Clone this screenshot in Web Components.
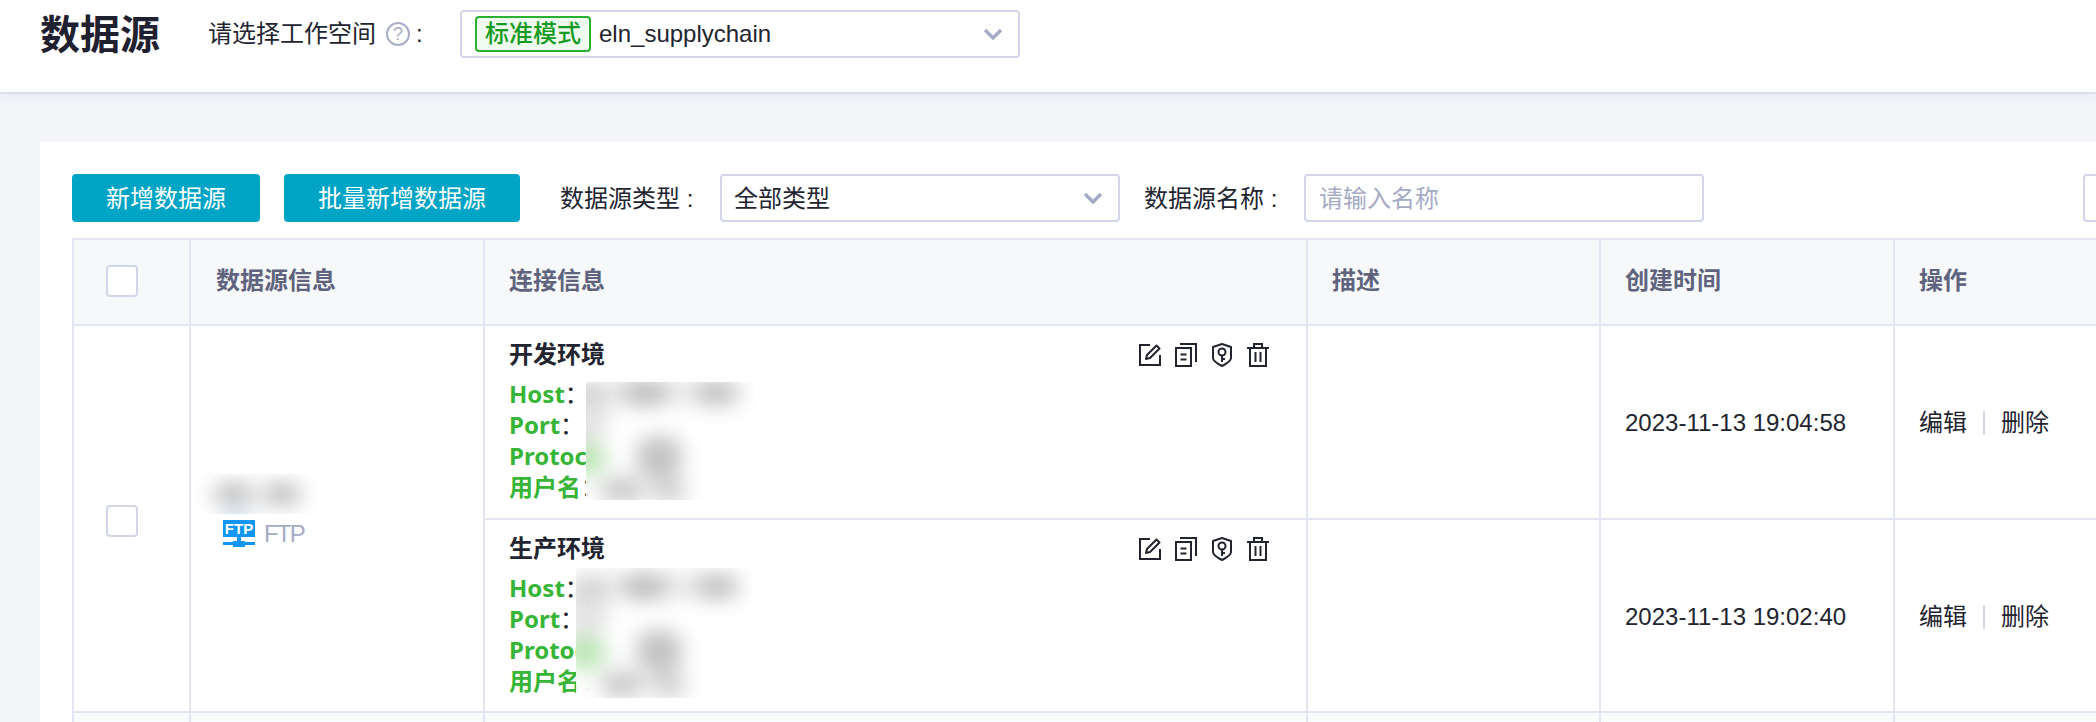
<!DOCTYPE html>
<html lang="zh">
<head>
<meta charset="utf-8">
<title>数据源</title>
<style>
  html, body { margin: 0; height: 722px; overflow: hidden; background: #f4f5f9; }
  body {
    font: 24px/36px "Liberation Sans", "Noto Sans CJK SC", sans-serif;
    color: #22242f;
  }
</style>
</head>
<body>
<ds-app></ds-app>

<script>
// Chevron used by both select boxes
const chevron = `<svg width="20" height="12" viewBox="0 0 20 12" fill="none"><path d="M2 2l8 8 8-8" stroke="#a6abc5" stroke-width="3.4"/></svg>`;

// Row action icons
const icons = {
  edit: `<svg width="24" height="24" viewBox="0 0 24 24" fill="none" stroke="currentColor" stroke-width="2"><path d="M12 2H2v20h20V12"/><path d="M8 16l1-4L18.500 2.500l3 3L12 15z" stroke-linejoin="round"/></svg>`,
  copy: `<svg width="24" height="24" viewBox="0 0 24 24" fill="none" stroke="currentColor" stroke-width="2"><path d="M6 1h16v18"/><rect x="2" y="5" width="15" height="18"/><path d="M6.500 11.500h6M6.500 16.500h6"/></svg>`,
  shield: `<svg width="24" height="24" viewBox="0 0 24 24" fill="none" stroke="currentColor" stroke-width="2"><path d="M12 1l9 3v11c0 3-5 6-9 8-4-2-9-5-9-8V4z" stroke-linejoin="round"/><circle cx="12" cy="9" r="3.500"/><path d="M12 12.500V19M12 16h3"/></svg>`,
  trash: `<svg width="24" height="24" viewBox="0 0 24 24" fill="none" stroke="currentColor" stroke-width="2"><path d="M1 5h22M8 5V1h8v4M4 5v18h16V5M9.500 9v10M14.500 9v10"/></svg>`
};

// Page header with workspace selector
class PageHeader extends HTMLElement {
  constructor() {
    super();
    this.attachShadow({ mode: 'open' });
  }

  connectedCallback() {
    this.shadowRoot.innerHTML = `
      <style>
        :host {
          display: flex;
          align-items: flex-start;
          box-sizing: border-box;
          height: 94px;
          background: #fff;
          border-bottom: 2px solid #d9dcea;
          box-shadow: 0 2px 10px rgba(200, 204, 225, 0.25);
          padding: 10px 0 0 40px;
        }
        h1 {
          margin: 0;
          padding-top: 1px;
          font-size: 40px;
          line-height: 48px;
          font-weight: 700;
          color: #1f2130;
          width: 168px;
        }
        .label {
          display: flex;
          align-items: center;
          height: 48px;
          width: 252px;
          white-space: nowrap;
        }
        .help {
          box-sizing: border-box;
          width: 24px;
          height: 24px;
          margin: 0 6px 0 10px;
          border: 2px solid #a9adc8;
          border-radius: 50%;
          color: #a9adc8;
          font-size: 18px;
          line-height: 20px;
          text-align: center;
        }
        .tag {
          box-sizing: border-box;
          height: 36px;
          padding: 0 8px;
          margin-right: 8px;
          line-height: 32px;
          background: #f0fbef;
          border: 2px solid #2bb132;
          border-radius: 4px;
          color: #159a22;
          font-weight: 500;
        }
      </style>
      <h1>数据源</h1>
      <div class="label">请选择工作空间<span class="help">?</span>:</div>
      <select-box width="560" style="--pad: 13px"><span class="tag">标准模式</span>eln_supplychain</select-box>
    `;
  }
}

// Select box: border, slotted value, chevron at the right
class SelectBox extends HTMLElement {
  constructor() {
    super();
    this.attachShadow({ mode: 'open' });
  }

  connectedCallback() {
    const width = this.getAttribute('width');
    this.shadowRoot.innerHTML = `
      <style>
        :host {
          display: flex;
          align-items: center;
          flex: none;
          box-sizing: border-box;
          width: ${width}px;
          height: 48px;
          padding: 0 15px 0 var(--pad, 12px);
          background: #fff;
          border: 2px solid #d3d6e8;
          border-radius: 4px;
        }
        .value {
          flex: 1;
          display: flex;
          align-items: center;
          white-space: nowrap;
          padding-top: var(--nudge, 0);
        }
        svg { display: block; }
      </style>
      <div class="value"><slot></slot></div>
      ${chevron}
    `;
  }
}

class PrimaryButton extends HTMLElement {
  constructor() {
    super();
    this.attachShadow({ mode: 'open' });
  }

  connectedCallback() {
    this.shadowRoot.innerHTML = `
      <style>
        :host {
          display: block;
          flex: none;
          box-sizing: border-box;
          height: 48px;
          line-height: 50px;
          background: #00a4c5;
          border-radius: 4px;
          color: #fff;
          text-align: center;
          white-space: nowrap;
        }
      </style>
      <slot></slot>
    `;
  }
}

// Filter row above the table
class DataToolbar extends HTMLElement {
  constructor() {
    super();
    this.attachShadow({ mode: 'open' });
  }

  connectedCallback() {
    this.shadowRoot.innerHTML = `
      <style>
        :host {
          display: flex;
          align-items: center;
          height: 48px;
          margin-bottom: 16px;
          white-space: nowrap;
        }
        .first { width: 188px; }
        .second { width: 236px; margin-left: 24px; }
        .filter { margin-left: 40px; width: 160px; flex: none; padding-top: 2px; }
        .filter.name { margin-left: 24px; }
        .input {
          flex: none;
          box-sizing: border-box;
          width: 400px;
          height: 48px;
          line-height: 46px;
          padding: 0 13px;
          border: 2px solid #d3d6e8;
          border-radius: 4px;
          color: #a6abc5;
        }
        .more { margin-left: 379px; width: 60px; }
      </style>
      <primary-button class="first">新增数据源</primary-button>
      <primary-button class="second">批量新增数据源</primary-button>
      <span class="filter">数据源类型 :</span>
      <select-box width="400" style="--nudge: 2px">全部类型</select-box>
      <span class="filter name">数据源名称 :</span>
      <div class="input">请输入名称</div>
      <div class="input more"></div>
    `;
  }
}

// Absolute patch of blurred content over a cell; blobs are "x,y,w,h,colour" in patch coordinates
class BlurPatch extends HTMLElement {
  constructor() {
    super();
    this.attachShadow({ mode: 'open' });
  }

  connectedCallback() {
    const blobs = (this.getAttribute('blobs') || '').split(';').filter(Boolean).map(b => {
      const [x, y, w, h, c] = b.split(',');
      return `<i style="left:${x}px;top:${y}px;width:${w}px;height:${h}px;background:${c}"></i>`;
    }).join('');
    this.shadowRoot.innerHTML = `
      <style>
        :host {
          display: block;
          position: absolute;
          overflow: hidden;
          background: rgba(255, 255, 255, 0.85);
          backdrop-filter: blur(9px);
        }
        i { position: absolute; filter: blur(10px); border-radius: 40%; mix-blend-mode: multiply; }
      </style>
      ${blobs}
    `;
  }
}

// One environment block in the connection column
class ConnInfo extends HTMLElement {
  constructor() {
    super();
    this.attachShadow({ mode: 'open' });
  }

  connectedCallback() {
    this.shadowRoot.innerHTML = `
      <style>
        :host {
          display: block;
          padding: 11px 0 0 24px;
        }
        .top {
          display: flex;
          align-items: center;
          height: 36px;
        }
        .title { width: 629px; font-weight: 700; }
        .tools { display: flex; gap: 12px; color: #22242f; }
        svg { display: block; }
        .rows { margin-top: 5px; }
        .row {
          height: 31px;
          line-height: 31px;
          white-space: nowrap;
        }
        b { color: #36b537; font-weight: 700; font-family: "Noto Sans", "Noto Sans CJK SC", sans-serif; }
      </style>
      <div class="top">
        <div class="title">${this.getAttribute('env')}</div>
        <div class="tools">${icons.edit}${icons.copy}${icons.shield}${icons.trash}</div>
      </div>
      <div class="rows">
        <div class="row"><b>Host</b>：</div>
        <div class="row"><b>Port</b>：</div>
        <div class="row"><b>Protocol</b>：</div>
        <div class="row"><b>用户名</b>：</div>
      </div>
    `;
  }
}

// Blobs for the blurred connection values, shifted per row
function connBlobs(dx, dy) {
  const list = [
    [-14, -2, 160, 24, '#e6e6e6'],
    [38, -2, 42, 26, '#d0d0d0'],
    [112, -2, 42, 26, '#d0d0d0'],
    [-20, 0, 42, 62, '#e4e4e4'],
    [-20, 60, 38, 34, '#bde6b6'],
    [50, 54, 46, 42, '#c4c4c4'],
    [14, 94, 44, 28, '#cccccc'],
    [64, 94, 36, 28, '#d4d4d4']
  ];
  return list.map(([x, y, w, h, c]) => [x + dx, y + dy, w, h, c].join(',')).join(';');
}

// Main table, drawn as a grid so that two rows can share their first cells
class DataTable extends HTMLElement {
  constructor() {
    super();
    this.attachShadow({ mode: 'open' });
  }

  connectedCallback() {
    const ops = `<div class="ops">编辑<span class="sep"></span>删除</div>`;
    this.shadowRoot.innerHTML = `
      <style>
        :host {
          display: grid;
          grid-template-columns: 117px 294px 823px 293px 294px 300px;
          grid-template-rows: 86px 194px 193px 40px;
          width: 2121px;
        }
        .cell {
          position: relative;
          box-sizing: border-box;
          border-top: 2px solid #e3e5f2;
          border-left: 2px solid #e3e5f2;
          background: #fff;
        }
        .head {
          display: flex;
          align-items: center;
          padding-left: 24px;
          padding-bottom: 2px;
          background: #f7f8fa;
          color: #5f637d;
          font-weight: 700;
        }
        .head.info-head { padding-left: 25px; }
        .mid { display: flex; align-items: center; padding-left: 24px; padding-top: 2px; }
        .check { padding-left: 32px; }
        .box {
          box-sizing: border-box;
          width: 32px;
          height: 32px;
          background: #fff;
          border: 2px solid #d3d6e8;
          border-radius: 4px;
        }
        .span2 { grid-row: span 2; }
        .info { padding-top: 148px; }
        .name { position: relative; height: 40px; }
        .source {
          display: flex;
          align-items: center;
          gap: 9px;
          margin: 6px 0 0 32px;
          height: 27px;
          color: #a6abc5;
          letter-spacing: -1.8px;
        }
        .ops { display: flex; align-items: center; }
        .sep { width: 2px; height: 24px; margin: 0 16px; background: #d3d6e8; }
        .next { background: #fafbfc; }
        svg { display: block; }
      </style>
      <div class="cell head check"><div class="box"></div></div>
      <div class="cell head info-head">数据源信息</div>
      <div class="cell head">连接信息</div>
      <div class="cell head">描述</div>
      <div class="cell head">创建时间</div>
      <div class="cell head">操作</div>

      <div class="cell mid check span2"><div class="box" style="margin-top:2px"></div></div>
      <div class="cell span2 info">
        <div class="name">
          <blur-patch style="left:2px;top:0;width:124px;height:40px" blobs="16,10,92,20,#ececec;22,8,36,24,#cfcfcf;72,8,36,24,#cfcfcf;26,40,36,10,#b8d4f0"></blur-patch>
        </div>
        <div class="source">
          <svg width="32" height="27" viewBox="0 0 32 27">
            <rect width="32" height="17" fill="#1296f5"/>
            <text x="16" y="14" text-anchor="middle" font-family="Liberation Sans" font-weight="700" font-size="15" letter-spacing="0" fill="#fff">FTP</text>
            <path d="M14 17h4v4h4v1h10v3H22v2H10v-2H0v-3h10v-1h4z" fill="#1296f5"/>
          </svg>
          FTP
        </div>
      </div>
      <div class="cell">
        <conn-info env="开发环境"></conn-info>
        <blur-patch style="left:101px;top:56px;width:168px;height:118px" blobs="${connBlobs(0, 0)}"></blur-patch>
      </div>
      <div class="cell"></div>
      <div class="cell mid">2023-11-13 19:04:58</div>
      <div class="cell mid">${ops}</div>

      <div class="cell">
        <conn-info env="生产环境"></conn-info>
        <blur-patch style="left:91px;top:48px;width:176px;height:130px" blobs="${connBlobs(10, 8)}"></blur-patch>
      </div>
      <div class="cell"></div>
      <div class="cell mid">2023-11-13 19:02:40</div>
      <div class="cell mid">${ops}</div>

      <div class="cell next"></div>
      <div class="cell next"></div>
      <div class="cell next"></div>
      <div class="cell next"></div>
      <div class="cell next"></div>
      <div class="cell next"></div>
    `;
  }
}

// White card that holds toolbar and table
class DataCard extends HTMLElement {
  constructor() {
    super();
    this.attachShadow({ mode: 'open' });
  }

  connectedCallback() {
    this.shadowRoot.innerHTML = `
      <style>
        :host {
          display: block;
          margin: 48px 0 0 40px;
          padding: 32px 0 0 32px;
          background: #fff;
        }
      </style>
      <data-toolbar></data-toolbar>
      <data-table></data-table>
    `;
  }
}

class DsApp extends HTMLElement {
  constructor() {
    super();
    this.attachShadow({ mode: 'open' });
  }

  connectedCallback() {
    this.shadowRoot.innerHTML = `
      <style>
        :host { display: block; width: 2096px; height: 722px; overflow: hidden; }
      </style>
      <page-header></page-header>
      <data-card></data-card>
    `;
  }
}

// Define Custom Elements
customElements.define('select-box', SelectBox);
customElements.define('primary-button', PrimaryButton);
customElements.define('data-toolbar', DataToolbar);
customElements.define('blur-patch', BlurPatch);
customElements.define('conn-info', ConnInfo);
customElements.define('data-table', DataTable);
customElements.define('data-card', DataCard);
customElements.define('page-header', PageHeader);
customElements.define('ds-app', DsApp);
</script>
</body>
</html>
